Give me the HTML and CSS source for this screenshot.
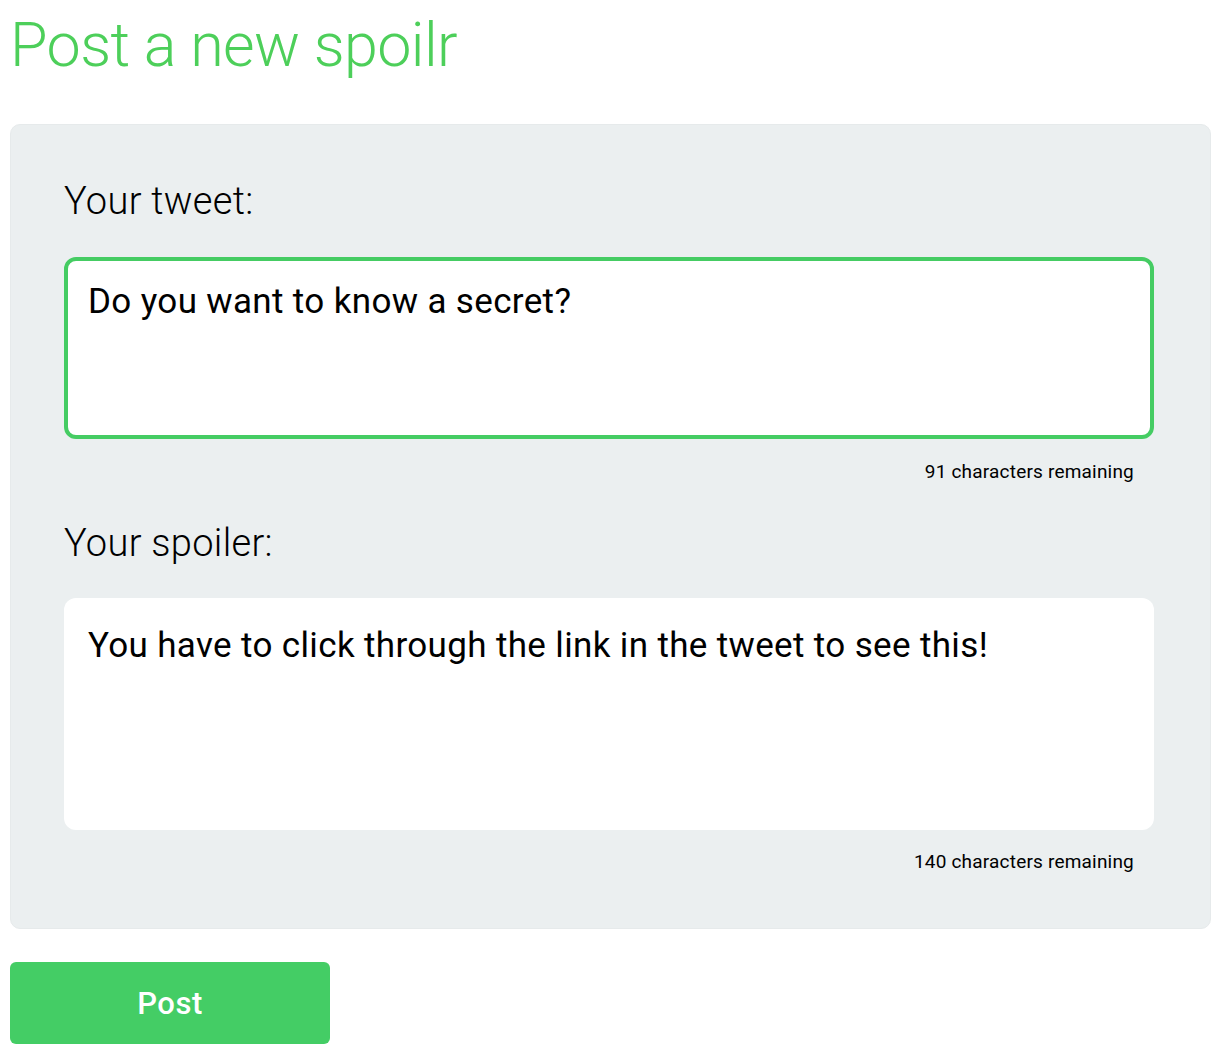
FILE: index.html
```html
<!DOCTYPE html>
<html lang="en">
<head>
<meta charset="utf-8">
<title>Post a new spoilr</title>
<link rel="stylesheet" href="styles.css">
</head>
<body>
<main class="page">
  <h1 class="title">Post a new spoilr</h1>
  <form class="panel">
    <label class="label" for="tweet">Your tweet:</label>
    <textarea id="tweet" class="field field-tweet focused">Do you want to know a secret?</textarea>
    <div class="counter">91 characters remaining</div>
    <label class="label label-spoiler" for="spoiler">Your spoiler:</label>
    <textarea id="spoiler" class="field field-spoiler">You have to click through the link in the tweet to see this!</textarea>
    <div class="counter counter-last">140 characters remaining</div>
  </form>
  <button class="post-btn" type="button">Post</button>
  <div class="floor"></div>
</main>
</body>
</html>
```
FILE: styles.css
```css
html, body {
  margin: 0;
  padding: 0;
  background: #ffffff;
}
body {
  font-family: Roboto, "Liberation Sans", sans-serif;
  color: #000;
  height: 1054px;
  overflow: hidden;
}
.page {
  padding: 0 13px 0 10px;
  position: relative;
  height: 1054px;
}
.title {
  margin: 9px 0 0 0;
  font-size: 61px;
  font-weight: 300;
  line-height: normal;
  color: #4dcf5a;
  letter-spacing: -0.6px;
}
.panel {
  margin-top: 43px;
  background: #ebeff0;
  border: 1px solid #e6eaeb;
  border-radius: 10px;
  padding: 54px 56px 55px 53px;
  display: flex;
  flex-direction: column;
}
.label {
  font-size: 38px;
  font-weight: 300;
  line-height: normal;
  letter-spacing: 0.3px;
  color: #000;
}
.label-spoiler {
  margin-top: 38px;
}
.field {
  display: block;
  box-sizing: border-box;
  width: 100%;
  margin: 0;
  font-family: Roboto, "Liberation Sans", sans-serif;
  font-size: 35px;
  line-height: normal;
  letter-spacing: 0.35px;
  color: #000;
  background: #fff;
  border: 4px solid transparent;
  border-radius: 12px;
  padding: 20px 20px;
  resize: none;
  outline: none;
  overflow: hidden;
}
.field-tweet {
  margin-top: 34px;
  height: 182px;
}
.field-tweet.focused {
  border-color: #45cc63;
}
.field-spoiler {
  margin-top: 33px;
  height: 232px;
  padding-top: 23px;
}
.counter {
  margin-top: 21px;
  padding-right: 20px;
  text-align: right;
  font-size: 19px;
  letter-spacing: 0.2px;
  line-height: normal;
  color: #000;
}
.counter-last {
  margin-top: 20px;
}
.post-btn {
  display: block;
  margin-top: 33px;
  width: 320px;
  height: 82px;
  border: none;
  border-radius: 6px;
  background: #44cd65;
  color: #fff;
  font-family: Roboto, "Liberation Sans", sans-serif;
  font-size: 31px;
  font-weight: 500;
  letter-spacing: 0.5px;
  cursor: pointer;
}
.floor {
  position: absolute;
  left: 0;
  right: 0;
  bottom: 0;
  height: 50px;
  background: radial-gradient(ellipse 640px 50px at 300px 100%, rgba(0,0,0,0.035), rgba(0,0,0,0) 100%);
  z-index: -1;
}
```
